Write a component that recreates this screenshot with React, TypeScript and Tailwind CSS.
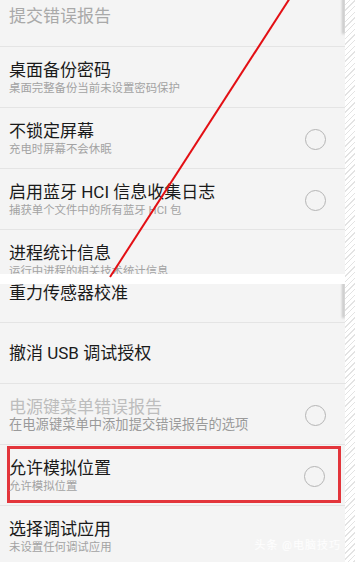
import React from "react";

type RowProps = {
  title: string;
  sub?: string;
  radio?: boolean;
  titleClass?: string;
  subClass?: string;
};

function Radio() {
  return <span className="mt-[3px] h-[21px] w-[21px] shrink-0 rounded-full border border-[#b5b5b5]" />;
}

function Row({ title, sub, radio, titleClass = "text-[#1a1a1a]", subClass = "text-[11.4px] text-[#a3a3a3]" }: RowProps) {
  if (!sub) {
    return (
      <div className="flex h-[61px] items-center border-b border-[#e4e4e4] pl-[9px]">
        <span className={`text-[17px] leading-[22px] ${titleClass}`}>{title}</span>
      </div>
    );
  }
  return (
    <div className="h-[61px] border-b border-[#e4e4e4] pl-[9px] pr-[19px] pt-[12px]">
      <div className="flex items-center justify-between">
        <div className="flex flex-col">
          <span className={`text-[17px] leading-[22px] ${titleClass}`}>{title}</span>
          <span className={`leading-[14px] ${subClass}`}>{sub}</span>
        </div>
        {radio && <Radio />}
      </div>
    </div>
  );
}

function Curl() {
  return (
    <div className="pointer-events-none absolute right-0 top-[-22px] h-[56px] w-[22px] rounded-tr-[22px] border-r-[3px] border-t-[3px] border-[#c8c8c8] blur-[1px]" />
  );
}

export default function App() {
  return (
    <div className="relative flex h-[562px] w-[355px] overflow-hidden bg-white font-['Roboto','Noto_Sans_CJK_SC',sans-serif]">
      <div className="flex w-[345px] flex-col">
        <div className="relative h-[274px] overflow-hidden bg-[#f4f4f4]">
          <div className="-mt-[14px]">
            <Row title="提交错误报告" titleClass="text-[#a9a9a9]" />
            <Row title="桌面备份密码" sub="桌面完整备份当前未设置密码保护" />
            <Row title="不锁定屏幕" sub="充电时屏幕不会休眠" radio />
            <Row title="启用蓝牙 HCI 信息收集日志" sub="捕获单个文件中的所有蓝牙 HCI 包" radio />
            <Row title="进程统计信息" sub="运行中进程的相关技术统计信息" />
          </div>
          <Curl />
        </div>

        <div className="h-[10px] bg-white" />

        <div className="relative flex-1 overflow-hidden bg-[#f4f4f4]">
          <div className="-mt-[21px]">
            <div className="flex h-[60px] items-center border-b border-[#e4e4e4] pl-[9px]">
              <span className="text-[17px] leading-[22px] text-[#1a1a1a]">重力传感器校准</span>
            </div>
            <Row title="撤消 USB 调试授权" />
            <Row
              title="电源键菜单错误报告"
              sub="在电源键菜单中添加提交错误报告的选项"
              titleClass="text-[#bdbdbd]"
              subClass="text-[13.3px] text-[#9a9a9a]"
              radio
            />
            <div className="h-[61px] border-b border-[#e4e4e4] py-[1px] pl-[7px] pr-[4px]">
              <div className="h-[57px] border-[3px] border-[#e3353b] pr-[13px] pt-[8px]">
                <div className="flex items-center justify-between">
                  <div className="flex flex-col">
                    <span className="-ml-[1px] text-[17px] leading-[22px] text-[#1a1a1a]">允许模拟位置</span>
                    <span className="-ml-[1px] text-[11.4px] leading-[14px] text-[#a3a3a3]">允许模拟位置</span>
                  </div>
                  <Radio />
                </div>
              </div>
            </div>
            <Row title="选择调试应用" sub="未设置任何调试应用" />
          </div>
          <Curl />
          <span className="absolute bottom-[8px] right-[4px] text-[11px] tracking-[1px] text-white/90">头条 @电脑技巧</span>
        </div>
      </div>

      <div className="w-[10px] bg-[repeating-linear-gradient(135deg,#ffffff_0px,#ffffff_3px,#e3e3e3_3px,#e3e3e3_4px)]" />

      <svg className="pointer-events-none absolute left-0 top-0" width="355" height="562">
        <line x1="290" y1="-2" x2="110" y2="277" stroke="#e30f14" strokeWidth="2" />
      </svg>
    </div>
  );
}
